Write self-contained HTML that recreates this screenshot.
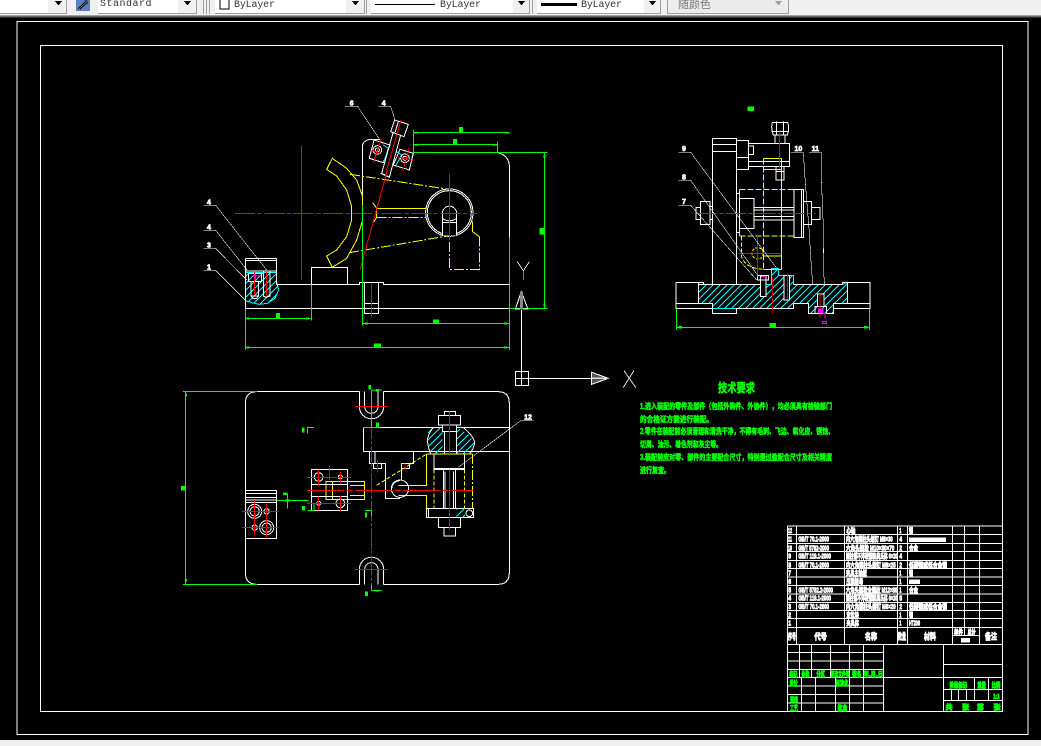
<!DOCTYPE html>
<html><head><meta charset="utf-8"><style>
html,body{margin:0;padding:0;background:#000;width:1041px;height:746px;overflow:hidden}
svg{position:absolute;left:0;top:0}
.w{fill:none;stroke:#fff;stroke-width:3}
.t{fill:none;stroke:#fff;stroke-width:1.6}
.y{fill:none;stroke:#ff0;stroke-width:3}
.yd{fill:none;stroke:#ff0;stroke-width:3;stroke-dasharray:30 6 6 6}
.r{fill:none;stroke:#f00;stroke-width:3}
.rd{fill:none;stroke:#f00;stroke-width:3;stroke-dasharray:60 8 12 8}
.g{fill:none;stroke:#0f0;stroke-width:3}
.c{fill:none;stroke:#0ff;stroke-width:3}
.m{fill:none;stroke:#f0f;stroke-width:4}
.h{fill:url(#hat);stroke:none}
.k{fill:#000;stroke:#fff;stroke-width:3}
.wt{fill:#fff;stroke:#fff;stroke-width:2;font:bold 21px "Liberation Sans","Noto Sans CJK SC",sans-serif;text-anchor:middle}
.tb{fill:#fff;stroke:#fff;stroke-width:2.600;font:bold 21px "Liberation Sans","Noto Sans CJK SC",sans-serif}
.tg{fill:#0f0;stroke:#0f0;stroke-width:2.600;font:bold 21px "Noto Sans CJK SC","Liberation Sans",sans-serif;text-anchor:middle}
.req{fill:#0f0;stroke:#0f0;stroke-width:.55;font:bold 8px "Liberation Sans","Noto Sans CJK SC",sans-serif}
.tx{font:10px "Liberation Mono","Noto Sans CJK SC",monospace;fill:#333}
</style></head><body>
<svg width="1041" height="746" viewBox="0 0 1041 746" xmlns="http://www.w3.org/2000/svg" shape-rendering="crispEdges">
<defs>
<pattern id="hat" width="21" height="21" patternUnits="userSpaceOnUse"><path d="M-3 24L24 -3" stroke="#0ff" stroke-width="3" fill="none"/><path d="M-3 3L3 -3M18 24L24 18" stroke="#0ff" stroke-width="3" fill="none"/></pattern>
</defs>
<rect width="1041" height="746" fill="#000"/>

<!-- toolbar -->
<rect width="1041" height="15" fill="#f0f0f0"/>
<rect y="15" width="1041" height="1" fill="#a0a0a0"/>
<rect y="16" width="1041" height="1" fill="#696969"/>
<rect y="17" width="1041" height="1" fill="#303030"/>
<rect x="0" y="0" width="48" height="13" fill="#fff"/>
<rect x="98" y="0" width="80" height="13" fill="#fff"/>
<rect x="215" y="0" width="131" height="13" fill="#fff"/>
<rect x="371" y="0" width="142" height="13" fill="#fff"/>
<rect x="537" y="0" width="107" height="13" fill="#fff"/>
<g fill="none" stroke="#a0a0a0">
<path d="M66.5 0V13.5H0M196.5 0V13.5H98M364.5 0V13.5H215M529.5 0V13.5H371M660.5 0V13.5H537M788.5 0V13.5H667.5V0"/>
<path d="M203.5 0V14M206.5 0V14M209.5 0V14M366.5 0V14M532.5 0V14"/>
</g>
<rect x="668" y="0" width="120" height="13" fill="#ececec"/>
<g fill="#000">
<path d="M55 1h7l-3.500 4.500zM184 1h7l-3.500 4.500zM352 1h7l-3.500 4.500zM518 1h7l-3.500 4.500zM649 1h7l-3.500 4.500z"/>
</g>
<path d="M775 1h7l-3.500 4.500z" fill="#a0a0a0"/>
<rect x="76" y="0" width="14" height="11" fill="#5a7fc0"/><path d="M78 9L87 0M80 9L88 2" stroke="#111" fill="none"/>
<rect x="220" y="-1" width="9" height="10" fill="#fff" stroke="#000"/>
<rect x="375" y="4" width="60" height="1" fill="#000"/>
<rect x="541" y="3" width="36" height="3" fill="#000"/>
<text x="100" y="6" class="tx" style="letter-spacing:.5px">Standard</text>
<text x="234" y="7" class="tx" textLength="41">ByLayer</text>
<text x="440" y="7" class="tx" textLength="41">ByLayer</text>
<text x="581" y="7" class="tx" textLength="41">ByLayer</text>
<text x="678" y="8" font-family="'Noto Sans CJK SC',sans-serif" font-size="11" fill="#777">随颜色</text>

<!-- frames -->
<rect x="0" y="740" width="1041" height="6" fill="#f0f0f0"/>
<rect x="17" y="21.500" width="1011" height="713" fill="none" stroke="#fff"/>
<rect x="40.500" y="45.500" width="962" height="666" fill="none" stroke="#fff"/>

<!-- MAIN VIEW -->
<g transform="translate(180 90) scale(.33333)">
<path class="h" d="M196 548H290V575L296 600L285 625L262 640L238 643L215 638L196 632Z"/>
<path class="c" d="M196 548H290V575L296 600L285 625L262 640L238 643L215 638L196 632Z"/>
<path class="w" d="M196 505H290V583M196 512H290M196 543H290M196 505V655H988M290 583H538V577H611V583H988M394 583V532H503V583M553 577V670H596V577M553 640H596"/>
<path class="w" d="M205 550H245V575H205ZM213 575V618H235V575M213 618L218 625H230L235 618M250 545V618L258 622L270 618V545"/>
<path class="r" d="M224 545V615M259 545V615M574 580V683"/>
<path class="m" d="M215 558H238M226 552V568"/>
<path class="w" d="M547 345V165Q552 150 572 148H600M700 187H950Q985 195 988 225V443"/>
<!-- leaders -->
<path class="t" d="M495 49H533L600 150M595 49H632L645 90M70 346H107L260 540M70 421H107L205 545M70 475H107L200 570M70 541H107L196 630"/>
<text x="515" y="46" class="wt">6</text><text x="611" y="46" class="wt">4</text>
<text x="87" y="344" class="wt">4</text><text x="87" y="419" class="wt">4</text><text x="87" y="473" class="wt">3</text><text x="87" y="539" class="wt">1</text>
<!-- yellow -->
<path class="y" d="M457 205L440 238L470 258L500 300L515 350V390L500 440L470 480L440 498L457 532L500 505L530 450L548 390V320L530 270L500 235Z"/>
<path class="yd" d="M510 253L800 297M508 488L808 437M590 382H738"/>
<path class="y" d="M590 355H738M590 355V382M578 338L590 355M590 382L578 400M878 395V425L898 440"/>
<path class="yd" d="M898 440V538H808V440"/>
<!-- circle -->
<circle class="w" cx="808" cy="368" r="71"/><circle class="w" cx="808" cy="368" r="66"/>
<path class="k" d="M787 437V370A21 21 0 0 1 830 370V437"/><path class="w" d="M787 398H830M787 385Q808 400 830 385"/>
<!-- bracket -->
<path class="k" d="M582 150L630 165L610 218L568 205Z"/><path class="k" d="M660 178L700 190L688 240L640 225Z"/>
<path class="c" d="M610 165L625 175L612 215M650 185L665 195L648 225"/>
<circle class="w" cx="592" cy="180" r="13"/><circle class="w" cx="592" cy="180" r="6"/>
<circle class="w" cx="675" cy="205" r="13"/><circle class="w" cx="675" cy="205" r="6"/>
<path class="w" d="M640 125L605 250L628 262L662 135M644 90L685 103L672 140L632 125ZM655 95L645 128M602 250L628 262"/>
<!-- red -->
<path class="rd" d="M165 370H893"/>
<path class="r" d="M364 168V570M808 252V450M663 90L620 240M622 240L541 537M575 180L600 190M604 145L580 218M688 172L668 245M650 200L700 212"/>
<!-- green dims -->
<path class="g" d="M700 120V187H952M952 155V187H1103M1093 187V655M988 655H1103M988 443V780M700 127H988M700 163H952M196 655V780M394 583V692M196 685H394M196 772H988M547 345V707M547 700H988"/>
<g fill="#0f0"><rect x="837" y="111" width="12" height="15"/><rect x="819" y="147" width="12" height="15"/><rect x="288" y="669" width="12" height="15"/><rect x="1078" y="414" width="15" height="20"/><rect x="759" y="688" width="18" height="11"/><rect x="582" y="760" width="21" height="11"/>
<rect x="700" y="127" width="15" height="4"/><rect x="973" y="127" width="15" height="4"/><rect x="700" y="163" width="15" height="4"/><rect x="937" y="163" width="15" height="4"/><rect x="200" y="682" width="9" height="7"/><rect x="378" y="682" width="9" height="7"/><rect x="200" y="769" width="9" height="7"/><rect x="972" y="769" width="9" height="7"/><rect x="555" y="697" width="9" height="6"/><rect x="972" y="697" width="9" height="6"/><rect x="1091" y="195" width="6" height="9"/><rect x="1091" y="640" width="6" height="9"/></g>
</g>

<!-- SIDE VIEW -->
<g transform="translate(660 100) scale(.33333)">
<path class="h" d="M115 553H335V505H355V527H400V553H547L562 547V610H520V640H445V610H400V625H157V610H115Z"/>
<path class="c" d="M115 553H335V505H355V527H400V553H547L562 547V610H520V640H445V610H400V625H157V610H115Z"/>
<path class="w" d="M48 547H130V553M48 547V625H157M48 610H157V640H230V625H400V610H445V640H520V610H630M520 625H630V547H547V553M115 553H300M400 553H547M115 547V610M562 547V610"/>
<path class="w" d="M157 553V115H230V553M157 133H230M157 155H230M230 122H265V208H230M230 172H265M265 130H388V200H265M265 185H388M265 138H280V163H265"/>
<path class="w" d="M340 105Q332 85 337 67H383Q390 85 382 105ZM350 65V105M370 65V105M335 95H385M345 105V130M375 105V130"/>
<path class="y" d="M310 175H365V508H310M310 208H365M310 468H365"/>
<path class="w" d="M348 200H372V240H348ZM348 215H372"/>
<path class="yd" d="M238 268H400M238 408H400M310 175V508" style="stroke-dasharray:18 6"/>
<path class="y" d="M238 268V408"/>
<path class="yd" d="M245 410V470Q255 505 310 508" style="stroke-dasharray:12 6"/><circle class="yd" cx="293" cy="460" r="17" style="stroke-dasharray:8 4"/>
<path class="k" d="M238 295H282V385H238Z"/><path class="w" d="M282 322H402M282 330H402M282 350H402M282 360H402M402 268H425V412H402ZM425 268H430V412H425M430 305H455V373H430ZM455 322H480V358H455ZM122 305H150V373H122ZM122 322H108V358H122M150 320H157M150 358H157M238 280H230M238 398H230"/>
<path class="k" d="M302 530H318V590H302ZM292 527H325V540H292Z"/>
<path class="k" d="M372 527H388V600H372Z"/><path class="k" d="M472 582H492V620H472Z"/><path class="w" d="M465 620H500V640H465Z"/>
<path class="r" d="M358 95V205M292 403V530M235 460H365M382 520V595M480 582V652"/><path class="r" d="M337 532V640" style="stroke-dasharray:15 6"/>
<path class="rd" d="M110 340H467"/>
<path class="m" d="M305 530H318"/><rect x="474" y="625" width="16" height="14" fill="#f0f"/><path class="m" d="M487 641H500M495 641V655M487 664H500V670H487Z" style="stroke-width:3"/>
<path class="t" d="M55 157H92L350 505M55 241H92L296 530M55 316H92L290 540M393 157H430L434 220L440 300L447 385L452 470L458 553M447 157H484V235L490 380L491 520L494 553"/>
<text x="72" y="153" class="wt">9</text><text x="72" y="238" class="wt">8</text><text x="72" y="312" class="wt">7</text><text x="415" y="153" class="wt">10</text><text x="466" y="153" class="wt">11</text>
<path class="g" d="M49 625V690M628 625V690M49 682H628"/>
<g fill="#0f0"><rect x="56" y="678" width="10" height="8"/><rect x="612" y="678" width="10" height="8"/><rect x="329" y="669" width="19" height="13"/><rect x="262" y="20" width="20" height="13"/></g>
</g>

<!-- PLAN VIEW -->
<g transform="translate(180 380) scale(.33333)">
<path class="w" d="M538 35H231Q196 35 196 70V578Q196 613 231 613H538M611 35H953Q988 35 988 70V578Q988 613 953 613H611"/>
<path class="w" d="M538 35V80A36 36 0 0 0 611 80V35M554 35V80A20 20 0 0 0 594 80V35M538 613V568A36 36 0 0 1 611 568V613M554 613V568A20 20 0 0 1 594 568V613"/>
<path class="w" d="M550 142H988M550 215H988M550 142V215M568 215V250H617V355H660M585 215V250H605V265H580V250M700 215V250H664V300M664 265H688V250"/>
<path class="h" d="M788 142H745L742 180L752 222H788ZM830 142L868 165L884 190L868 222H830Z"/>
<path class="w" d="M760 142Q742 165 742 185Q745 205 752 222M850 142Q882 170 884 188Q880 210 868 222"/>
<path class="k" d="M793 95H826V107H793ZM775 107H842V135H775ZM788 135H830V155H788Z"/>
<path class="w" d="M793 155V222M830 155V222M762 222V268H854V222M762 265H854M790 268V385M826 268V385M795 275V385M820 275V385M740 385H880V412H740ZM775 412H842V442H775ZM792 442H826V468H792ZM745 385V412"/>
<path class="h" d="M830 385H855V412H830Z"/><circle class="w" cx="868" cy="400" r="10"/>
<path class="y" d="M740 222H878M510 316H555M510 346H555M655 316H740V222M655 346H740V385M438 304H553V358H438ZM458 304V358"/>
<path class="yd" d="M590 316L740 222M762 268V385M854 268V385" style="stroke-dasharray:12 6"/>
<path class="yd" d="M878 222V385"/>
<path class="w" d="M394 268H503V392H394ZM394 313H503M394 349H503"/>
<circle class="w" cx="416" cy="291" r="13"/><circle class="w" cx="481" cy="291" r="6"/><circle class="w" cx="416" cy="370" r="6"/><circle class="w" cx="481" cy="370" r="13"/>
<circle class="w" cx="660" cy="326" r="26"/><path class="w" d="M635 326A25 25 0 0 1 660 302"/>
<path class="w" d="M196 331H290V476H196ZM196 341H290M196 352H290M196 360H290M196 367H290"/>
<circle class="w" cx="224" cy="394" r="21"/><circle class="w" cx="224" cy="394" r="14"/><circle class="w" cx="260" cy="394" r="8"/><circle class="w" cx="260" cy="443" r="21"/><circle class="w" cx="260" cy="443" r="14"/><circle class="w" cx="224" cy="443" r="8"/>
<path class="r" d="M186 394H296M186 443H296M224 360V465M260 372V476M381 292H513M415 268V316M481 275V312M381 370H513M415 350V392M481 347V395M448 258V300M808 95V222M808 268V450M592 240V278M675 250V272M525 80H623M525 568H623"/>
<path class="rd" d="M574 35V630" style="stroke-dasharray:60 6 10 6"/>
<path class="rd" d="M381 331H880" style="stroke-width:3;stroke-dasharray:110 8 18 8"/>
<path class="t" d="M1060 122H1022L835 262"/>
<text x="1044" y="118" class="wt">12</text>
<path class="g" d="M9 35H232M9 613H232M16 35V613M574 30H604M574 142V30M550 142H600M574 613V632H604M382 160V142H402M382 392H402V370M555 391H575V410M290 361H386M323 340V385"/>
<g fill="#0f0"><rect x="3" y="318" width="12" height="14"/><rect x="566" y="15" width="7" height="14"/><rect x="588" y="27" width="9" height="8"/><rect x="588" y="128" width="9" height="13"/><rect x="366" y="142" width="8" height="15"/><rect x="366" y="378" width="9" height="14"/><rect x="555" y="398" width="6" height="15"/><rect x="555" y="634" width="9" height="14"/><rect x="588" y="630" width="9" height="5"/><rect x="309" y="338" width="14" height="7"/><rect x="316" y="358" width="14" height="7"/><rect x="16" y="42" width="5" height="8"/><rect x="16" y="597" width="5" height="8"/></g>
</g>

<!-- TECH REQUIREMENTS -->
<text x="718" y="392" class="req" style="font-size:12px" textLength="37" lengthAdjust="spacingAndGlyphs">技术要求</text>
<text x="640" y="409" class="req" textLength="192" lengthAdjust="spacingAndGlyphs">1.进入装配的零件及部件（包括外购件、外协件），均必须具有检验部门</text>
<text x="640" y="422" class="req" textLength="73" lengthAdjust="spacingAndGlyphs">的合格证方能进行装配。</text>
<text x="640" y="434" class="req" textLength="194" lengthAdjust="spacingAndGlyphs">2.零件在装配前必须清理和清洗干净，不得有毛刺、飞边、氧化皮、锈蚀、</text>
<text x="640" y="447" class="req" textLength="82" lengthAdjust="spacingAndGlyphs">切屑、油污、着色剂和灰尘等。</text>
<text x="640" y="460" class="req" textLength="192" lengthAdjust="spacingAndGlyphs">3.装配前应对零、部件的主要配合尺寸，特别是过盈配合尺寸及相关精度</text>
<text x="640" y="473" class="req" textLength="30" lengthAdjust="spacingAndGlyphs">进行复查。</text>

<!-- TITLE BLOCK -->
<g transform="translate(780 520) scale(.33333)">
<path class="w" d="M22 18H669M22 44H669M22 70H669M22 95H669M22 121H669M22 146H669M22 171H669M22 197H669M22 222H669M22 247H669M22 272H669M22 296H669M22 322H669M22 373H669M22 18V575M50 18V373M193 18V373M352 18V373M382 18V373M517 18V373M553 18V347M598 18V373M517 347H598"/>
<path class="w" d="M22 397H310M22 423H310M22 448H310M22 472H669M22 498H310M22 523H310M22 549H310M58 373V472M95 373V472M151 373V472M208 373V472M250 373V472M64 472V575M106 472V575M166 472V575M209 472V575M250 472V575M310 373V575M490 373V575M490 433H669M490 508H669M490 541H669M583 472V541M626 472V541M514 508V541M535 508V541M560 508V541"/>
<g class="tb">
<text x="24" y="39" textLength="12" lengthAdjust="spacingAndGlyphs">12</text><text x="24" y="65" textLength="12" lengthAdjust="spacingAndGlyphs">11</text><text x="24" y="91" textLength="12" lengthAdjust="spacingAndGlyphs">10</text><text x="25" y="116" textLength="8" lengthAdjust="spacingAndGlyphs">9</text><text x="25" y="142" textLength="8" lengthAdjust="spacingAndGlyphs">8</text><text x="25" y="166" textLength="8" lengthAdjust="spacingAndGlyphs">7</text><text x="25" y="192" textLength="8" lengthAdjust="spacingAndGlyphs">6</text><text x="25" y="217" textLength="8" lengthAdjust="spacingAndGlyphs">5</text><text x="25" y="242" textLength="8" lengthAdjust="spacingAndGlyphs">4</text><text x="25" y="267" textLength="8" lengthAdjust="spacingAndGlyphs">3</text><text x="25" y="292" textLength="8" lengthAdjust="spacingAndGlyphs">2</text><text x="25" y="317" textLength="8" lengthAdjust="spacingAndGlyphs">1</text>
<text x="55" y="65" textLength="92" lengthAdjust="spacingAndGlyphs">GB/T 70.1-2000</text><text x="55" y="91" textLength="92" lengthAdjust="spacingAndGlyphs">GB/T 5782-2000</text><text x="55" y="116" textLength="98" lengthAdjust="spacingAndGlyphs">GB/T 119.1-2000</text><text x="55" y="142" textLength="92" lengthAdjust="spacingAndGlyphs">GB/T 70.1-2000</text><text x="55" y="217" textLength="104" lengthAdjust="spacingAndGlyphs">GB/T 5782.2-2000</text><text x="55" y="242" textLength="98" lengthAdjust="spacingAndGlyphs">GB/T 119.1-2000</text><text x="55" y="267" textLength="92" lengthAdjust="spacingAndGlyphs">GB/T 70.1-2000</text>
<text x="199" y="39" textLength="27" lengthAdjust="spacingAndGlyphs">心轴</text><text x="198" y="65" textLength="140" lengthAdjust="spacingAndGlyphs">内六角圆柱头螺钉 M8×30</text><text x="198" y="91" textLength="145" lengthAdjust="spacingAndGlyphs">六角头螺栓 M10×30×70</text><text x="198" y="116" textLength="154" lengthAdjust="spacingAndGlyphs">圆柱销不淬硬钢和奥氏体 6×20</text><text x="198" y="142" textLength="149" lengthAdjust="spacingAndGlyphs">内六角圆柱头螺钉 M8×25</text><text x="198" y="166" textLength="63" lengthAdjust="spacingAndGlyphs">夹具主轴板</text><text x="199" y="192" textLength="50" lengthAdjust="spacingAndGlyphs">压紧螺母</text><text x="198" y="217" textLength="154" lengthAdjust="spacingAndGlyphs">六角头螺栓全螺纹 M12×80</text><text x="198" y="242" textLength="154" lengthAdjust="spacingAndGlyphs">圆柱销不淬硬钢和奥氏体 6×20</text><text x="198" y="267" textLength="149" lengthAdjust="spacingAndGlyphs">内六角圆柱头螺钉 M6×20</text><text x="199" y="292" textLength="38" lengthAdjust="spacingAndGlyphs">定位块</text><text x="199" y="317" textLength="38" lengthAdjust="spacingAndGlyphs">夹具体</text>
<text x="358" y="39" textLength="6" lengthAdjust="spacingAndGlyphs">1</text><text x="358" y="65" textLength="8" lengthAdjust="spacingAndGlyphs">4</text><text x="358" y="91" textLength="8" lengthAdjust="spacingAndGlyphs">2</text><text x="358" y="116" textLength="8" lengthAdjust="spacingAndGlyphs">4</text><text x="358" y="142" textLength="8" lengthAdjust="spacingAndGlyphs">2</text><text x="358" y="166" textLength="6" lengthAdjust="spacingAndGlyphs">1</text><text x="358" y="192" textLength="6" lengthAdjust="spacingAndGlyphs">1</text><text x="358" y="217" textLength="6" lengthAdjust="spacingAndGlyphs">1</text><text x="358" y="242" textLength="8" lengthAdjust="spacingAndGlyphs">8</text><text x="358" y="267" textLength="8" lengthAdjust="spacingAndGlyphs">2</text><text x="358" y="292" textLength="6" lengthAdjust="spacingAndGlyphs">1</text><text x="358" y="317" textLength="6" lengthAdjust="spacingAndGlyphs">1</text>
<text x="387" y="39" textLength="12" lengthAdjust="spacingAndGlyphs">钢</text><text x="387" y="91" textLength="27" lengthAdjust="spacingAndGlyphs">合金</text><text x="387" y="142" textLength="114" lengthAdjust="spacingAndGlyphs">低碳钢或低合金钢</text><text x="387" y="166" textLength="12" lengthAdjust="spacingAndGlyphs">钢</text><text x="387" y="217" textLength="27" lengthAdjust="spacingAndGlyphs">合金</text><text x="387" y="267" textLength="114" lengthAdjust="spacingAndGlyphs">低碳钢或低合金钢</text><text x="387" y="292" textLength="12" lengthAdjust="spacingAndGlyphs">钢</text><text x="387" y="317" textLength="33" lengthAdjust="spacingAndGlyphs">HT200</text>
</g>
<rect x="387" y="52" width="111" height="14" fill="#fff"/><rect x="387" y="178" width="33" height="14" fill="#fff"/><rect x="543" y="354" width="27" height="14" fill="#fff"/>
<g class="tb" style="font-size:26px;text-anchor:middle">
<text x="36" y="358" textLength="24" lengthAdjust="spacingAndGlyphs">序号</text><text x="122" y="358" textLength="38" lengthAdjust="spacingAndGlyphs">代号</text><text x="273" y="358" textLength="36" lengthAdjust="spacingAndGlyphs">名称</text><text x="366" y="358" textLength="24" lengthAdjust="spacingAndGlyphs">数量</text><text x="450" y="358" textLength="36" lengthAdjust="spacingAndGlyphs">材料</text><text x="633" y="358" textLength="36" lengthAdjust="spacingAndGlyphs">备注</text>
<text x="535" y="343" style="font-size:20px" textLength="27" lengthAdjust="spacingAndGlyphs">单件</text><text x="575" y="343" style="font-size:20px" textLength="24" lengthAdjust="spacingAndGlyphs">总计</text>
</g>
<text x="40" y="470" class="tg" textLength="24" lengthAdjust="spacingAndGlyphs">标记</text><text x="76" y="470" class="tg" textLength="24" lengthAdjust="spacingAndGlyphs">处数</text><text x="122" y="470" class="tg" textLength="26" lengthAdjust="spacingAndGlyphs">分区</text><text x="180" y="470" class="tg" textLength="56" lengthAdjust="spacingAndGlyphs">更改文件号</text><text x="230" y="470" class="tg" textLength="28" lengthAdjust="spacingAndGlyphs">签名</text><text x="280" y="470" class="tg" textLength="58" lengthAdjust="spacingAndGlyphs">年.月.日</text>
<text x="41" y="496" class="tg" textLength="24" lengthAdjust="spacingAndGlyphs">设计</text><text x="186" y="496" class="tg" textLength="38" lengthAdjust="spacingAndGlyphs">标准化</text><text x="42" y="546" class="tg" textLength="24" lengthAdjust="spacingAndGlyphs">审核</text><text x="42" y="572" class="tg" textLength="24" lengthAdjust="spacingAndGlyphs">工艺</text><text x="187" y="572" class="tg" textLength="28" lengthAdjust="spacingAndGlyphs">批准</text>
<text x="535" y="502" class="tg" textLength="52" lengthAdjust="spacingAndGlyphs">阶段标记</text><text x="605" y="502" class="tg" textLength="26" lengthAdjust="spacingAndGlyphs">重量</text><text x="648" y="502" class="tg" textLength="26" lengthAdjust="spacingAndGlyphs">比例</text><text x="649" y="537" class="tg" textLength="20" lengthAdjust="spacingAndGlyphs">1:1</text>
<text x="507" y="568" class="tg">共</text><text x="557" y="568" class="tg">张</text><text x="601" y="568" class="tg">第</text><text x="651" y="568" class="tg">张</text>
</g>

<!-- UCS icon -->
<g transform="translate(500 250) scale(.33333)">
<path class="w" d="M64 180V385M46 364H86V406H46ZM64 364V406M46 385H86M86 385H275M46 177H86"/>
<path d="M46 178L64 125L84 178" class="w"/><path d="M64 125V178" stroke="#888" stroke-width="9" fill="none"/>
<path d="M275 367V403L325 385Z" fill="#555" stroke="#fff" stroke-width="3"/><path d="M275 385H325" stroke="#ddd" stroke-width="4"/>
<path class="t" d="M52 35L70 62L88 35M70 62V90M372 362L407 412M402 362L370 412" style="stroke-width:2.500"/>
</g>
</svg>
</body></html>
